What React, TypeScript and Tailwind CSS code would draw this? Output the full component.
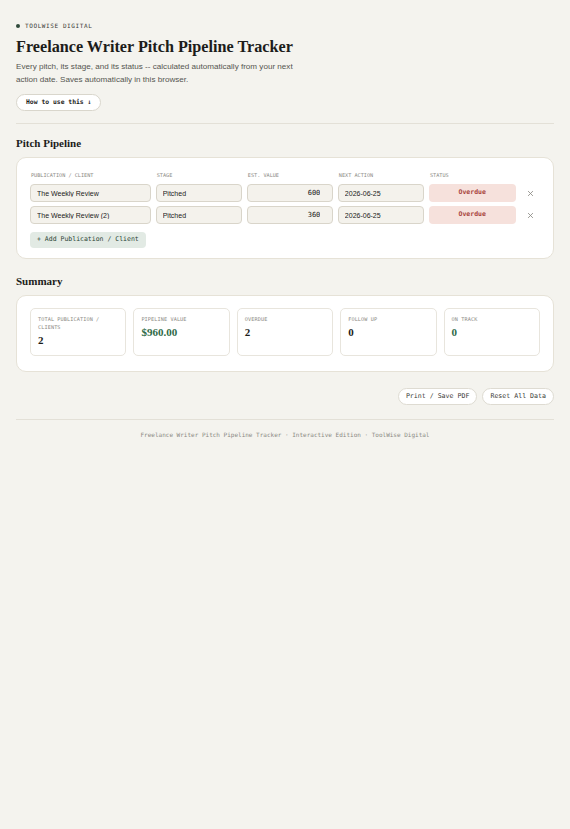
import { useMemo, useState } from "react";

type Pitch = {
  id: number;
  client: string;
  stage: string;
  value: number;
  nextAction: string;
};

const SERIF = "font-['Liberation_Serif','Times_New_Roman',serif]";
const SANS = "font-['Liberation_Sans',Arial,sans-serif]";
const MONO = "font-['DejaVu_Sans_Mono','Liberation_Mono',monospace]";

const initialPitches: Pitch[] = [
  { id: 1, client: "The Weekly Review", stage: "Pitched", value: 600, nextAction: "2026-06-25" },
  { id: 2, client: "The Weekly Review (2)", stage: "Pitched", value: 360, nextAction: "2026-06-25" },
];

export default function App() {
  const [pitches, setPitches] = useState<Pitch[]>(initialPitches);

  const summary = useMemo(() => {
    const total = pitches.reduce((s, p) => s + p.value, 0);
    return {
      count: pitches.length,
      value: `$${total.toFixed(2)}`,
      overdue: pitches.length,
      followUp: 0,
      onTrack: 0,
    };
  }, [pitches]);

  const update = (id: number, patch: Partial<Pitch>) =>
    setPitches((ps) => ps.map((p) => (p.id === id ? { ...p, ...patch } : p)));

  return (
    <div className={`min-h-screen bg-[#f4f3ee] px-4 pt-[21px] pb-10 text-[#1c1c1a] ${SANS}`}>
      <div className={`flex items-center gap-[5px] text-[6px] tracking-[0.1em] text-[#3a3a36] ${MONO}`}>
        <span className="h-[4px] w-[4px] rounded-full bg-[#2f4a3a]" />
        TOOLWISE DIGITAL
      </div>

      <h1 className={`mt-[6px] text-[16.2px] font-bold leading-[22px] ${SERIF}`}>
        Freelance Writer Pitch Pipeline Tracker
      </h1>
      <p className="mt-[2px] max-w-[285px] text-[8.1px] leading-[13px] text-[#555550]">
        Every pitch, its stage, and its status -- calculated automatically from your next action
        date. Saves automatically in this browser.
      </p>
      <button
        type="button"
        className={`mt-[8px] h-[17px] rounded-full border border-[#d9d6cc] bg-white px-[9px] text-[6.4px] font-bold text-[#1c1c1a] ${MONO}`}
      >
        How to use this ↓
      </button>

      <div className="mt-[12px] h-px bg-[#e3e0d7]" />

      <h2 className={`mt-[12px] text-[11px] font-bold leading-[14px] ${SERIF}`}>Pitch Pipeline</h2>
      <div className="mt-[7px] rounded-[10px] border-[1.5px] border-[#e6e2d7] bg-white px-[13px] pt-[14px] pb-[10px]">
        <div className="grid grid-cols-[1.4fr_1fr_1fr_1fr_1fr_20px] gap-x-[4.5px] gap-y-[4px]">
          {["PUBLICATION / CLIENT", "STAGE", "EST. VALUE", "NEXT ACTION", "STATUS", ""].map((h, i) => (
            <div key={i} className={`mb-[1px] pl-[1px] text-[5.2px] leading-[7px] text-[#8b8a84] ${MONO}`}>
              {h}
            </div>
          ))}
          {pitches.map((p) => (
            <Row key={p.id} p={p} update={update} onRemove={() => setPitches((ps) => ps.filter((x) => x.id !== p.id))} />
          ))}
        </div>
        <button
          type="button"
          onClick={() =>
            setPitches((ps) => [
              ...ps,
              { id: Date.now(), client: "", stage: "Pitched", value: 0, nextAction: "" },
            ])
          }
          className={`mt-[8px] h-[16px] rounded-[4px] bg-[#e2eae4] px-[7px] text-[6.5px] text-[#2b4536] ${MONO}`}
        >
          + Add Publication / Client
        </button>
      </div>

      <h2 className={`mt-[15px] text-[11px] font-bold leading-[14px] ${SERIF}`}>Summary</h2>
      <div className="mt-[7px] rounded-[10px] border-[1.5px] border-[#e6e2d7] bg-white px-[13px] pt-[12px] pb-[15px]">
        <div className="grid grid-cols-5 gap-[7px]">
          <Stat label="TOTAL PUBLICATION / CLIENTS" value={String(summary.count)} />
          <Stat label="PIPELINE VALUE" value={summary.value} green />
          <Stat label="OVERDUE" value={String(summary.overdue)} />
          <Stat label="FOLLOW UP" value={String(summary.followUp)} />
          <Stat label="ON TRACK" value={String(summary.onTrack)} green />
        </div>
      </div>

      <div className="mt-[16px] flex justify-end gap-[5px]">
        <button
          type="button"
          className={`h-[17px] rounded-full border border-[#dedbd2] bg-white px-[7px] text-[6.6px] text-[#3a3a36] ${MONO}`}
        >
          Print / Save PDF
        </button>
        <button
          type="button"
          onClick={() => setPitches(initialPitches)}
          className={`h-[17px] rounded-full border border-[#dedbd2] bg-white px-[7px] text-[6.6px] text-[#3a3a36] ${MONO}`}
        >
          Reset All Data
        </button>
      </div>

      <div className="mt-[14px] h-px bg-[#e3e0d7]" />
      <p className={`mt-[10px] text-center text-[6px] text-[#8b8a84] ${MONO}`}>
        Freelance Writer Pitch Pipeline Tracker · Interactive Edition · ToolWise Digital
      </p>
    </div>
  );
}

function Row({
  p,
  update,
  onRemove,
}: {
  p: Pitch;
  update: (id: number, patch: Partial<Pitch>) => void;
  onRemove: () => void;
}) {
  const field =
    "h-[18px] w-full min-w-0 rounded-[4px] border border-[#d9d5ca] bg-[#f4f2ec] px-[6px] text-[7px] text-[#1c1c1a] outline-none";
  return (
    <>
      <input className={field} value={p.client} onChange={(e) => update(p.id, { client: e.target.value })} />
      <input className={field} value={p.stage} onChange={(e) => update(p.id, { stage: e.target.value })} />
      <input
        className={`${field} text-right ${MONO} pr-[12px] text-[6.7px]`}
        value={p.value}
        onChange={(e) => update(p.id, { value: Number(e.target.value) || 0 })}
      />
      <input className={field} value={p.nextAction} onChange={(e) => update(p.id, { nextAction: e.target.value })} />
      <div
        className={`flex h-[18px] items-center justify-center rounded-[4px] bg-[#f6e1dc] text-[6.5px] font-bold text-[#a8443c] ${MONO}`}
      >
        Overdue
      </div>
      <button type="button" onClick={onRemove} className="flex h-[18px] items-center justify-center text-[#8b8a84]">
        <svg width="7" height="7" viewBox="0 0 10 10" stroke="currentColor" strokeWidth="1.2">
          <path d="M1.5 1.5l7 7M8.5 1.5l-7 7" />
        </svg>
      </button>
    </>
  );
}

function Stat({ label, value, green }: { label: string; value: string; green?: boolean }) {
  return (
    <div className="h-[48px] rounded-[5px] border border-[#e8e5dd] px-[7px] pt-[6px]">
      <p className={`text-[5.2px] leading-[8px] tracking-[0.02em] text-[#8b8a84] ${MONO}`}>{label}</p>
      <p className={`mt-[2px] text-[11px] font-bold leading-[14px] ${SERIF} ${green ? "text-[#2f6b47]" : "text-[#1c1c1a]"}`}>
        {value}
      </p>
    </div>
  );
}
